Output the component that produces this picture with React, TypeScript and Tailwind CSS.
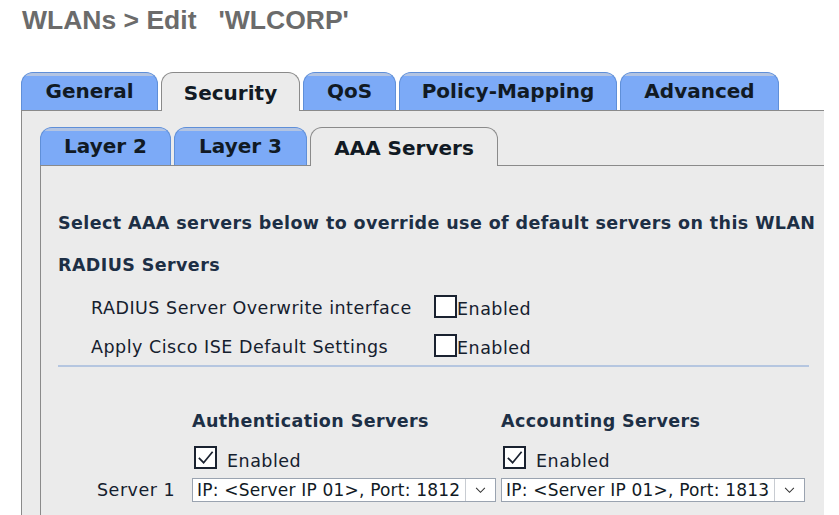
import React from "react";

// ── Tabs ──────────────────────────────────────────────────────────────────────
type TabProps = { label: string; width: number; active?: boolean };

const Tab = ({ label, width, active }: TabProps) =>
  active ? (
    <div
      className="relative z-10 -mb-px flex h-[39px] items-center justify-center rounded-t-[12px] border border-b-0 border-[#8a8a8a] bg-[#ebebeb] pt-[2px] text-[20px] font-bold text-[#111a24]"
      style={{ width }}
    >
      {label}
    </div>
  ) : (
    <div
      className="flex h-[38px] flex-col overflow-hidden rounded-t-[12px] border border-b-0 border-[#5f8fd8] bg-[#7caaf7]"
      style={{ width }}
    >
      <div className="h-[5px] bg-[#b3c4e2]" />
      <div className="flex flex-1 items-center justify-center pb-[4px] text-[20px] font-bold text-[#111a24]">
        {label}
      </div>
    </div>
  );

// ── Checkbox ──────────────────────────────────────────────────────────────────
const Box = ({ checked }: { checked?: boolean }) => (
  <span className="inline-flex h-[23px] w-[23px] shrink-0 items-center justify-center border-2 border-[#1a2230] bg-white">
    {checked && (
      <svg viewBox="0 0 20 20" className="h-[19px] w-[19px]">
        <path d="M3 10.5 L8 15.5 L17.5 4" fill="none" stroke="#1a2230" strokeWidth="1.8" />
      </svg>
    )}
  </span>
);

// ── Select ────────────────────────────────────────────────────────────────────
const Select = ({ value }: { value: string }) => (
  <div className="flex h-[24px] w-[304px] items-center border border-[#9aa3b0] bg-white text-[17px] tracking-[0.2px] text-[#111a24]">
    <span className="flex-1 whitespace-nowrap pl-[4px] leading-none">{value}</span>
    <span className="flex h-full w-[30px] shrink-0 items-center justify-center border-l border-[#c8ccd2]">
      <svg viewBox="0 0 12 8" className="h-[7px] w-[11px]">
        <path d="M1 1 L6 6 L11 1" fill="none" stroke="#333" strokeWidth="1.2" />
      </svg>
    </span>
  </div>
);

const outerTabs = [
  { label: "General", width: 137 },
  { label: "Security", width: 139, active: true },
  { label: "QoS", width: 93 },
  { label: "Policy-Mapping", width: 218 },
  { label: "Advanced", width: 159 },
];

const innerTabs = [
  { label: "Layer 2", width: 131 },
  { label: "Layer 3", width: 133 },
  { label: "AAA Servers", width: 188, active: true },
];

const heading = "text-[17.5px] font-bold leading-[20px] tracking-[0.4px] text-[#1d2f45]";

const App = () => {
  return (
    <div
      className="h-[515px] w-[839px] overflow-hidden bg-white"
      style={{ fontFamily: '"DejaVu Sans", Verdana, sans-serif' }}
    >
      <h1
        className="pl-[22px] pt-[4px] text-[26.5px] font-bold leading-[32px] text-[#6b6b6b]"
        style={{ fontFamily: '"Liberation Sans", Arial, sans-serif' }}
      >
        WLANs &gt; Edit&nbsp;&nbsp;&nbsp;'WLCORP'
      </h1>

      <div className="pl-[21px] pt-[36px]">
        {/* Outer tab row */}
        <div className="flex items-end gap-[3px]">
          {outerTabs.map((t) => (
            <Tab key={t.label} {...t} />
          ))}
        </div>

        {/* Outer panel */}
        <div className="h-[420px] w-[803px] border-l border-t border-[#8a8a8a] bg-[#ebebeb] pl-[18px] pt-[16px]">
          <div className="flex items-end gap-[3px]">
            {innerTabs.map((t) => (
              <Tab key={t.label} {...t} />
            ))}
          </div>

          <div className="h-[400px] border-l border-t border-[#8a8a8a] pl-[17px] pt-[47px] text-[#15202e]">
            <p className={heading + " whitespace-nowrap"}>
              Select AAA servers below to override use of default servers on this WLAN
            </p>
            <p className={heading + " mt-[22px]"}>RADIUS Servers</p>

            <div className="mt-[20px] flex flex-col gap-[16px] pl-[33px] text-[17.5px] tracking-[0.5px]">
              <div className="flex items-end">
                <span className="w-[343px] leading-[20px]">RADIUS Server Overwrite interface</span>
                <Box />
                <span className="leading-[18px]">Enabled</span>
              </div>
              <div className="flex items-end">
                <span className="w-[343px] leading-[20px]">Apply Cisco ISE Default Settings</span>
                <Box />
                <span className="leading-[18px]">Enabled</span>
              </div>
            </div>

            <div className="mr-[15px] mt-[8px] h-[2px] bg-[#b5c6e0]" />

            <div className="mt-[44px] grid grid-cols-[134px_309px_309px] text-[17.5px] tracking-[0.5px]">
              <div />
              <div className={heading}>Authentication Servers</div>
              <div className={heading}>Accounting Servers</div>

              <div />
              <div className="mt-[12px] flex items-center gap-[10px] pl-[2px]">
                <Box checked />
                <span className="leading-[20px] pt-[8px]">Enabled</span>
              </div>
              <div className="mt-[12px] flex items-center gap-[10px] pl-[2px]">
                <Box checked />
                <span className="leading-[20px] pt-[8px]">Enabled</span>
              </div>

              <div className="mt-[7px] pl-[39px] leading-[24px]">Server 1</div>
              <div className="mt-[7px]">
                <Select value="IP: <Server IP 01>, Port: 1812" />
              </div>
              <div className="mt-[7px]">
                <Select value="IP: <Server IP 01>, Port: 1813" />
              </div>
            </div>
          </div>
        </div>
      </div>
    </div>
  );
};

export default App;
